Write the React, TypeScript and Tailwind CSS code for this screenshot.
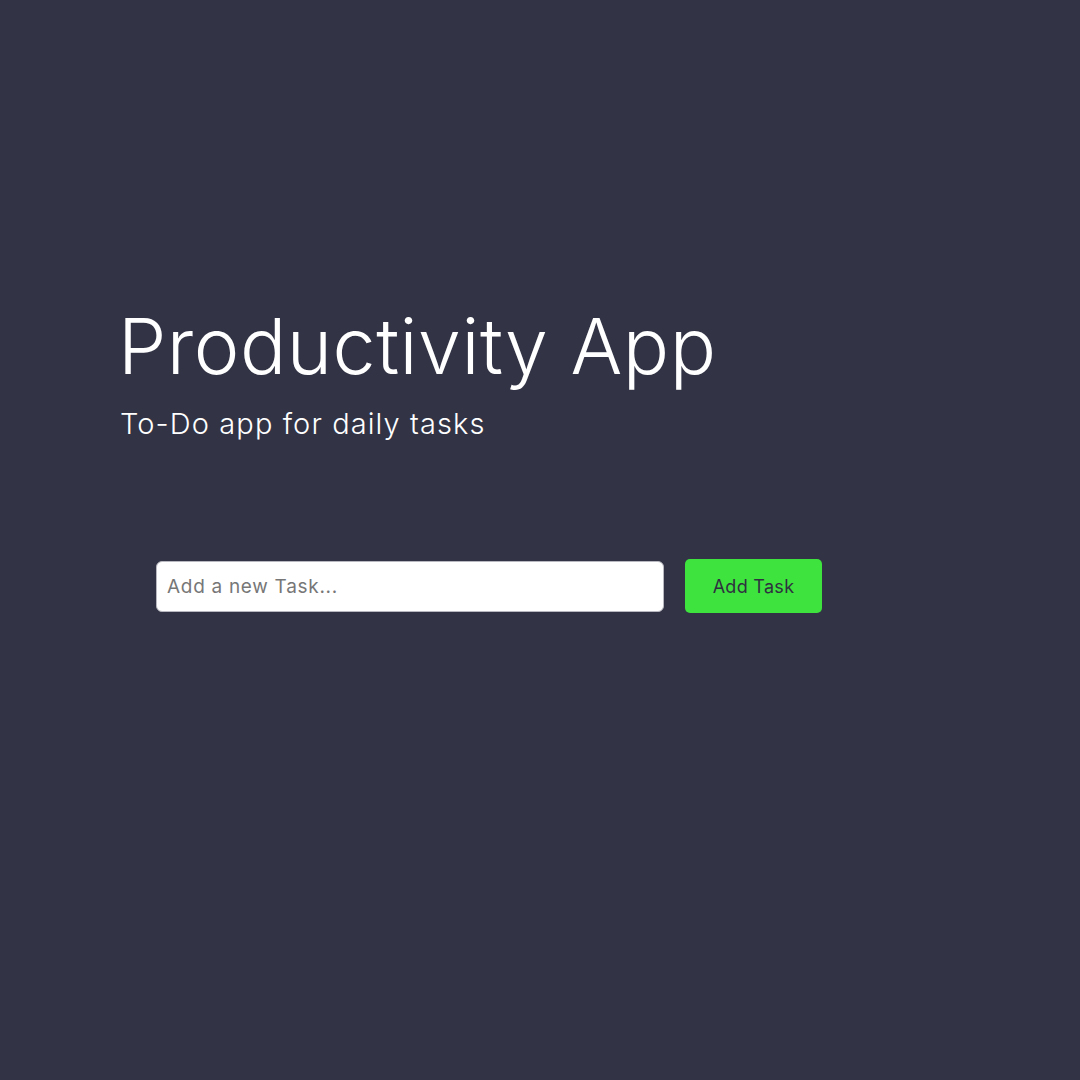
import React from "react";

export default function App() {
  return (
    <div
      className="w-[1080px] h-[1080px] bg-[#323445] flex flex-col"
      style={{ fontFamily: '"Inter", "Noto Sans", sans-serif' }}
    >
      <div className="pl-[118px] pt-[301px] flex flex-col">
        <h1 className="text-white text-[77px] leading-[90px] font-light tracking-[0.5px]">
          Productivity App
        </h1>
        <p className="text-white text-[29px] leading-[36px] font-light mt-[15px] ml-[2px] tracking-[1.1px]">
          To-Do app for daily tasks
        </p>
      </div>
      <div className="flex items-center gap-[21px] pl-[156px] mt-[117px]">
        <input
          className="w-[508px] h-[51px] bg-white rounded-[6px] border border-[#b8b8c0] px-[10px] text-[19px] tracking-[0.7px] text-[#333] placeholder:text-[#777] outline-none"
          placeholder="Add a new Task..."
        />
        <button className="w-[137px] h-[54px] bg-[#3ee33e] rounded-[5px] text-[18px] tracking-[0.3px] text-[#2f3140]">
          Add Task
        </button>
      </div>
    </div>
  );
}
